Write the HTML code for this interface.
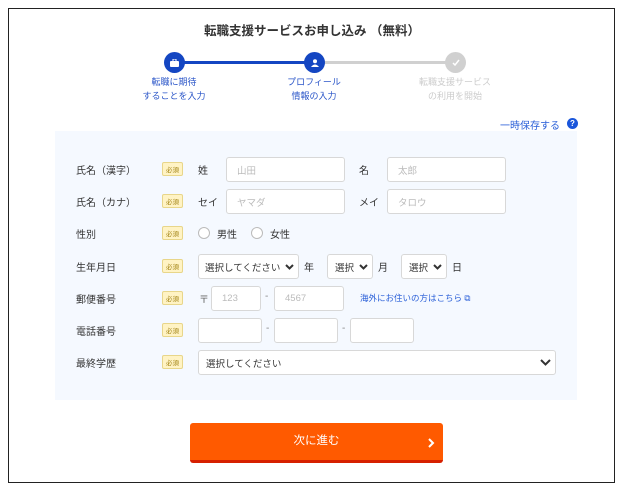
<!DOCTYPE html><html><head><meta charset="utf-8"><style>
*{box-sizing:border-box;margin:0;padding:0}
body{width:624px;height:490px;background:#fff;font-family:"Liberation Sans","Noto Sans CJK JP",sans-serif;position:relative;overflow:hidden;color:#333}
.a{position:absolute;white-space:nowrap}
.frame{left:8px;top:8px;width:607px;height:475px;border:1.5px solid #222}
.title{left:0;width:624px;top:20px;text-align:center;font-size:12.5px;font-weight:bold;color:#333}
.circ{width:21px;height:21px;border-radius:50%;color:#fff;font-size:9px;display:flex;align-items:center;justify-content:center}
.sl{font-size:9px;text-align:center;line-height:14px;width:120px}
.panel{left:55px;top:131px;width:522px;height:269px;background:#f5f9ff}
.lab{left:76px;font-size:10px;color:#333}
.bd{left:162px;width:21px;height:14px;background:#fff3c4;border:1px solid #e8d68a;border-radius:2px;font-size:6.5px;color:#a08010;display:flex;align-items:center;justify-content:center}
.in{background:#fff;border:1px solid #d8d8d8;border-radius:3px;height:25px;font-size:9.5px;color:#bbb;padding-left:10px;display:flex;align-items:center}
.t{font-size:10px;color:#333}
.sel{color:#333;font-size:9.5px;padding-left:7px;justify-content:space-between;padding-right:4px}
.rad{width:12px;height:12px;border:1px solid #bbb;border-radius:50%;background:#fff}
</style></head><body>
<div class="a frame"></div>
<div class="a title">転職支援サービスお申し込み （無料）</div>
<div class="a" style="left:174px;top:61px;width:140px;height:3px;background:#1446c2"></div>
<div class="a" style="left:314px;top:61px;width:141px;height:3px;background:#d0d0d0"></div>
<div class="a circ" style="left:164px;top:52px;background:#1446c2"><svg width="9" height="8" viewBox="0 0 9 8"><rect x="0" y="2" width="9" height="6" rx="1" fill="#fff"/><rect x="3" y="0" width="3" height="3" fill="none" stroke="#fff"/></svg></div>
<div class="a circ" style="left:304px;top:52px;background:#1446c2"><svg width="8" height="8" viewBox="0 0 8 8"><circle cx="4" cy="2.3" r="2" fill="#fff"/><path d="M0 8 Q4 3 8 8Z" fill="#fff"/></svg></div>
<div class="a circ" style="left:445px;top:52px;background:#d0d0d0"><svg width="8" height="7" viewBox="0 0 8 7"><path d="M1 4 L3 6 L7 1" stroke="#fff" stroke-width="1.5" fill="none"/></svg></div>
<div class="a sl" style="left:114px;top:75px;color:#2a55c8">転職に期待<br>することを入力</div>
<div class="a sl" style="left:254px;top:75px;color:#2a55c8">プロフィール<br>情報の入力</div>
<div class="a sl" style="left:395px;top:75px;color:#ccc">転職支援サービス<br>の利用を開始</div>
<div class="a" style="left:500px;top:117px;font-size:10px;color:#2a5fd8">一時保存する</div>
<div class="a" style="left:567px;top:118px;width:11px;height:11px;border-radius:50%;background:#1a56db;color:#fff;font-size:8px;font-weight:bold;text-align:center;line-height:11px">?</div>
<div class="a panel"></div>

<div class="a lab" style="top:162px">氏名（漢字）</div><div class="a bd" style="top:162px">必須</div>
<div class="a t" style="left:198px;top:162px">姓</div><div class="a in" style="left:226px;top:157px;width:119px">山田</div>
<div class="a t" style="left:359px;top:162px">名</div><div class="a in" style="left:387px;top:157px;width:119px">太郎</div>

<div class="a lab" style="top:194px">氏名（カナ）</div><div class="a bd" style="top:194px">必須</div>
<div class="a t" style="left:198px;top:194px">セイ</div><div class="a in" style="left:226px;top:189px;width:119px">ヤマダ</div>
<div class="a t" style="left:359px;top:194px">メイ</div><div class="a in" style="left:387px;top:189px;width:119px">タロウ</div>

<div class="a lab" style="top:226px">性別</div><div class="a bd" style="top:226px">必須</div>
<div class="a rad" style="left:198px;top:227px"></div><div class="a t" style="left:217px;top:226px">男性</div>
<div class="a rad" style="left:251px;top:227px"></div><div class="a t" style="left:270px;top:226px">女性</div>

<div class="a lab" style="top:259px">生年月日</div><div class="a bd" style="top:259px">必須</div>
<div class="a in sel" style="left:198px;top:254px;width:101px;padding-left:6px">選択してください<svg width="9" height="6" viewBox="0 0 9 6"><path d="M1 1 L4.5 4.5 L8 1" stroke="#333" stroke-width="2" fill="none"/></svg></div>
<div class="a t" style="left:304px;top:259px">年</div>
<div class="a in sel" style="left:327px;top:254px;width:46px">選択<svg width="9" height="6" viewBox="0 0 9 6"><path d="M1 1 L4.5 4.5 L8 1" stroke="#333" stroke-width="2" fill="none"/></svg></div>
<div class="a t" style="left:378px;top:259px">月</div>
<div class="a in sel" style="left:401px;top:254px;width:46px">選択<svg width="9" height="6" viewBox="0 0 9 6"><path d="M1 1 L4.5 4.5 L8 1" stroke="#333" stroke-width="2" fill="none"/></svg></div>
<div class="a t" style="left:452px;top:259px">日</div>

<div class="a lab" style="top:291px">郵便番号</div><div class="a bd" style="top:291px">必須</div>
<div class="a t" style="left:199px;top:291px;color:#666">〒</div>
<div class="a in" style="left:211px;top:286px;width:50px">123</div>
<div class="a t" style="left:265px;top:291px;color:#888">-</div>
<div class="a in" style="left:274px;top:286px;width:70px">4567</div>
<div class="a" style="left:360px;top:292px;font-size:8.5px;color:#2a5fd8">海外にお住いの方はこちら ⧉</div>

<div class="a lab" style="top:323px">電話番号</div><div class="a bd" style="top:323px">必須</div>
<div class="a in" style="left:198px;top:318px;width:64px"></div>
<div class="a t" style="left:266px;top:323px;color:#888">-</div>
<div class="a in" style="left:274px;top:318px;width:64px"></div>
<div class="a t" style="left:342px;top:323px;color:#888">-</div>
<div class="a in" style="left:350px;top:318px;width:64px"></div>

<div class="a lab" style="top:355px">最終学歴</div><div class="a bd" style="top:355px">必須</div>
<div class="a in sel" style="left:198px;top:350px;width:358px">選択してください<svg width="11" height="7" viewBox="0 0 11 7"><path d="M1 1 L5.5 5.5 L10 1" stroke="#333" stroke-width="2" fill="none"/></svg></div>

<div class="a" style="left:190px;top:423px;width:253px;height:40px;background:#ff5a00;border-bottom:3px solid #d62000;border-radius:3px;color:#fff;font-size:11.5px;text-align:center;line-height:37px">次に進む</div>
<svg class="a" style="left:428px;top:438px" width="7" height="10" viewBox="0 0 7 10"><path d="M1 1 L5 5 L1 9" stroke="#fff" stroke-width="2" fill="none"/></svg>
</body></html>
